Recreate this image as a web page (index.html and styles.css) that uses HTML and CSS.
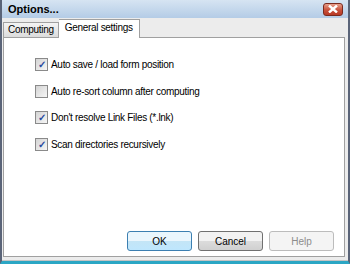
FILE: index.html
```html
<!DOCTYPE html>
<html lang="en">
<head>
<meta charset="UTF-8" />
<title>Options...</title>
<link rel="stylesheet" href="styles.css">
</head>
<body>
<div class="window">
  <div class="titlebar">
    <span class="title">Options...</span>
    <div class="close">
      <svg width="14" height="8" viewBox="0 0 14 8"><path d="M3 0.5 L11 7.5 M11 0.5 L3 7.5" stroke="#fff" stroke-width="2.4"/></svg>
    </div>
  </div>
  <div class="client">
    <div class="tabs">
      <div class="tab">Computing</div>
      <div class="tab active">General settings</div>
    </div>
    <div class="panel">
      <label class="check"><span class="box on">&#10003;</span>Auto save / load form position</label>
      <label class="check"><span class="box"></span>Auto re-sort column after computing</label>
      <label class="check"><span class="box on">&#10003;</span>Don't resolve Link Files (*.lnk)</label>
      <label class="check"><span class="box on">&#10003;</span>Scan directories recursively</label>
      <div class="buttons">
        <button class="btn default">OK</button>
        <button class="btn">Cancel</button>
        <button class="btn disabled">Help</button>
      </div>
    </div>
  </div>
</div>
</body>
</html>
```

FILE: styles.css
```css
body {
  margin: 0;
  font-family: "Liberation Sans", Arial, sans-serif;
  font-size: 10px;
  letter-spacing: -0.3px;
  color: #000;
}
.window {
  width: 350px;
  height: 264px;
  box-sizing: border-box;
  border-left: 2px solid #5a6478;
  border-right: 2px solid #5a6478;
  border-bottom: 3px solid #2ba6c4;
  background: #ececec;
  display: flex;
  flex-direction: column;
}
.titlebar {
  height: 18px;
  background: linear-gradient(#d6e4f2, #b4cce6);
  display: flex;
  align-items: center;
  justify-content: space-between;
  padding: 0 5px 0 6px;
}
.title {
  font-weight: bold;
  font-size: 11px;
  letter-spacing: 0;
  color: #000;
}
.close {
  width: 20px;
  height: 13px;
  border-radius: 3px;
  border: 1px solid #7a2a1e;
  background: linear-gradient(#e8a08c, #c8503a 55%, #b83a26);
  display: flex;
  align-items: center;
  justify-content: center;
  box-sizing: border-box;
}
.client {
  flex: 1;
  display: flex;
  flex-direction: column;
  padding: 1px 3px 3px 1px;
  border-bottom: 1px solid #c4c4c4;
}
.tabs {
  display: flex;
  align-items: flex-end;
  height: 18px;
}
.tab {
  height: 14px;
  line-height: 14px;
  padding: 0 4px;
  border: 1px solid #a0a0a0;
  border-bottom: none;
  background: linear-gradient(#f4f4f4, #dcdcdc);
}
.tab.active {
  height: 18px;
  line-height: 16px;
  padding: 0 6px;
  background: #fff;
  margin-bottom: -1px;
  position: relative;
  z-index: 1;
  border-left: none;
}
.panel {
  flex: 1;
  background: #fff;
  border: 1px solid #a0a0a0;
  padding: 20px 0 0 31px;
  display: flex;
  flex-direction: column;
  gap: 13.5px;
}
.check {
  display: flex;
  align-items: center;
  gap: 3px;
  height: 13px;
  color: #000;
}
.box {
  width: 11px;
  height: 11px;
  border: 1px solid #8a8a8a;
  background: linear-gradient(135deg, #d4d4d4, #f6f6f6);
  color: #2a4ba0;
  font-size: 10px;
  font-weight: bold;
  line-height: 11px;
  text-align: center;
}
.buttons {
  margin-top: auto;
  margin-bottom: 5px;
  align-self: flex-end;
  display: flex;
  gap: 6px;
  margin-right: 10px;
}
.btn {
  width: 65px;
  height: 20px;
  font-family: inherit;
  font-size: 10px;
  border: 1px solid #707070;
  border-radius: 3px;
  background: linear-gradient(#f2f2f2 50%, #dcdcdc 50%, #d0d0d0);
  color: #000;
  padding: 0;
}
.btn.default {
  border-color: #3c7fb1;
  background: linear-gradient(#eaf6fd 50%, #c4e5f6 50%, #bee6fd);
}
.btn.disabled {
  border-color: #bcbcbc;
  background: #f4f4f4;
  color: #8c8c8c;
}
```
